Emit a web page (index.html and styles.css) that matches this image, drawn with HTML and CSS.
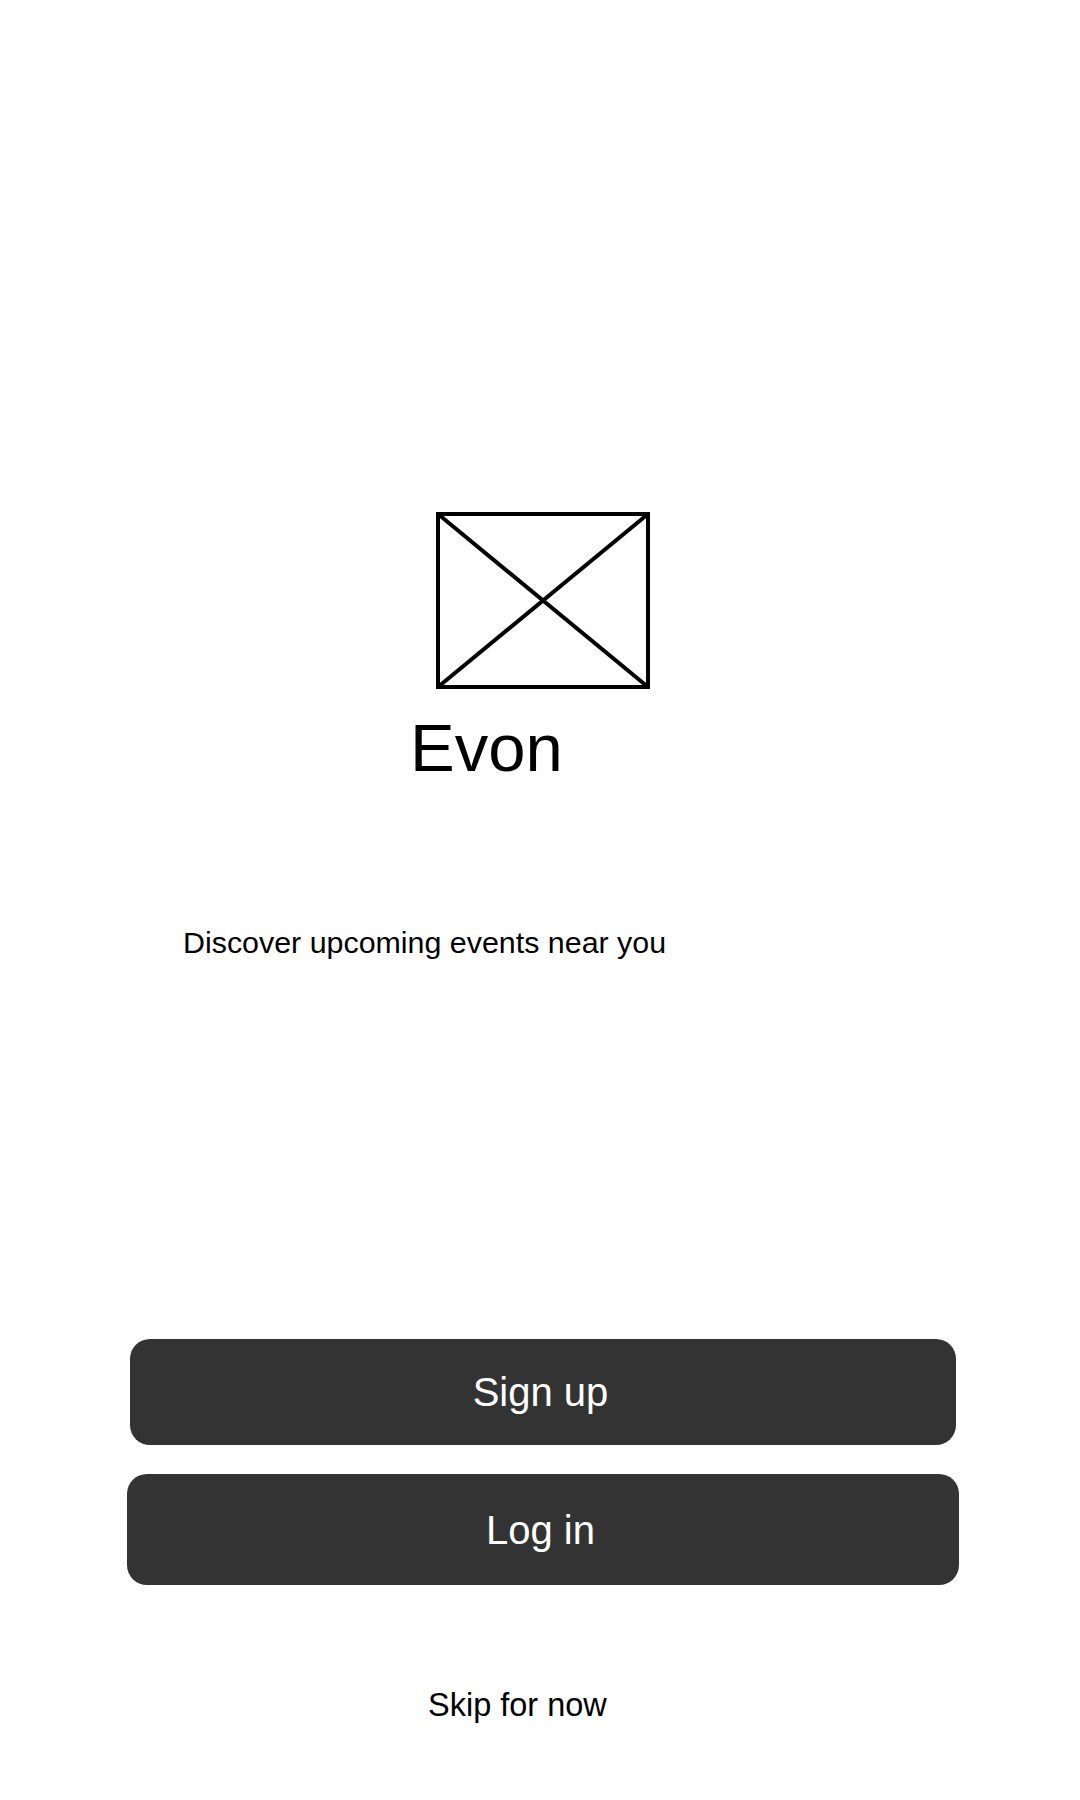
FILE: index.html
```html
<!DOCTYPE html>
<html lang="en">
<head>
<meta charset="utf-8">
<title>Evon</title>
<link rel="stylesheet" href="styles.css">
</head>
<body>
<main class="screen">
  <svg class="logo" width="214" height="177" viewBox="0 0 214 177" aria-hidden="true">
    <rect x="2" y="2" width="210" height="173" fill="none" stroke="#000" stroke-width="4"/>
    <line x1="2" y1="2" x2="212" y2="175" stroke="#000" stroke-width="4"/>
    <line x1="212" y1="2" x2="2" y2="175" stroke="#000" stroke-width="4"/>
  </svg>
  <h1 class="brand">Evon</h1>
  <p class="tagline">Discover upcoming events near you</p>
  <button class="btn btn-signup" type="button">Sign up</button>
  <button class="btn btn-login" type="button">Log in</button>
  <a class="skip" href="#">Skip for now</a>
</main>
</body>
</html>
```

FILE: styles.css
```css
html, body {
  margin: 0;
  padding: 0;
  background: #ffffff;
}

.screen {
  width: 1080px;
  height: 1800px;
  display: flex;
  flex-direction: column;
  align-items: flex-start;
  font-family: "Liberation Sans", Arial, sans-serif;
  color: #000;
}

.logo {
  display: block;
  margin: 512px 0 0 436px;
}

.brand {
  margin: 25px 0 0 410px;
  font-size: 67px;
  font-weight: 400;
  line-height: 1;
}

.tagline {
  margin: 146px 0 0 183px;
  font-size: 30.4px;
  line-height: 1;
}

.btn {
  display: flex;
  align-items: center;
  justify-content: center;
  border: none;
  background: #333333;
  color: #ffffff;
  font-family: "Liberation Sans", Arial, sans-serif;
  border-radius: 20px;
  padding: 0 5px 0 0;
  line-height: 1;
  font-size: 40px;
}

.btn-signup {
  margin: 382px 0 0 130px;
  width: 826px;
  height: 106px;
}

.btn-login {
  margin: 29px 0 0 127px;
  width: 832px;
  height: 111px;
}

.skip {
  margin: 104px 0 0 428px;
  font-size: 32.5px;
  line-height: 1;
  color: #000;
  text-decoration: none;
}
```
